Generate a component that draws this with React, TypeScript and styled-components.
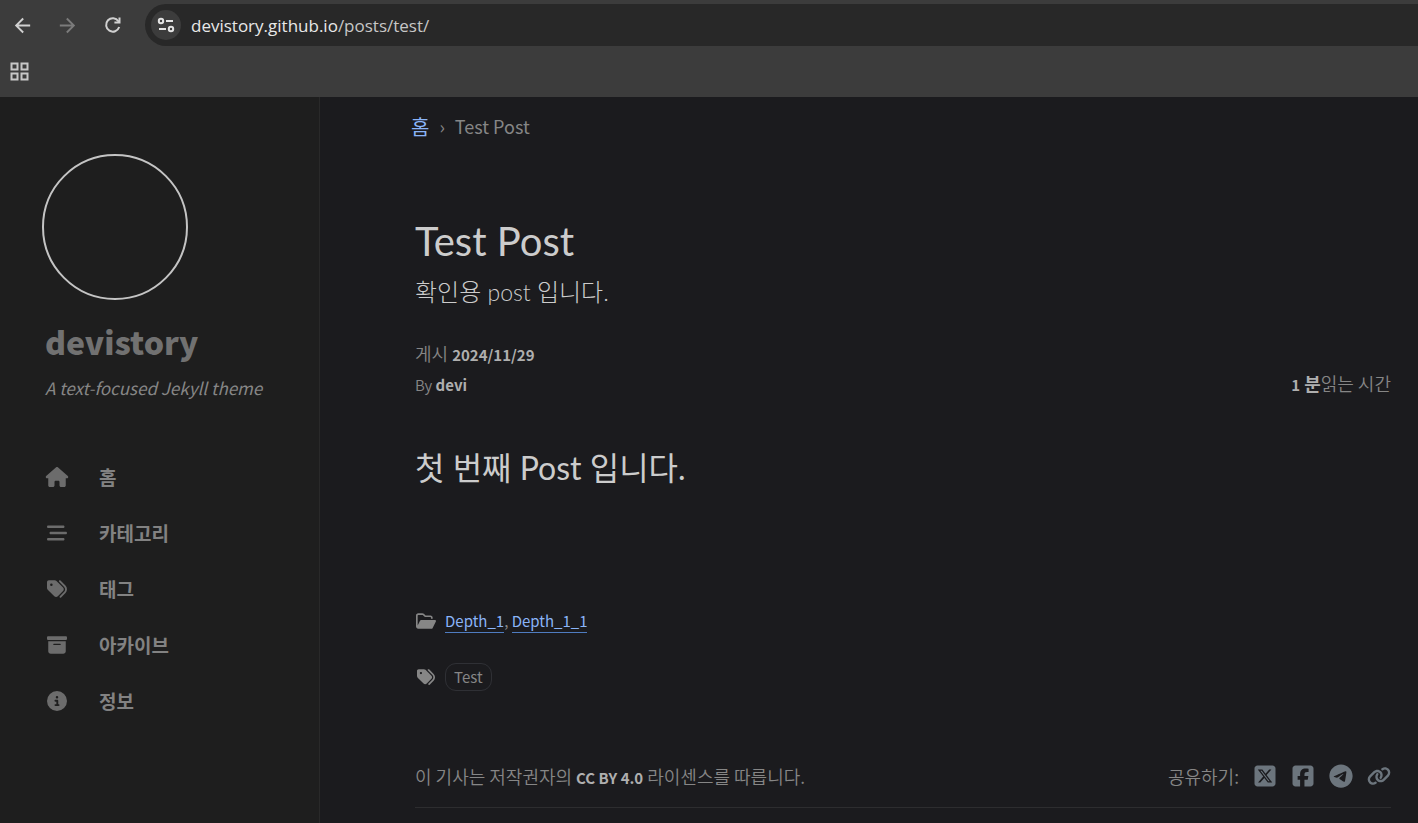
import React from 'react';
import styled, { createGlobalStyle, css } from 'styled-components';
import {
  FaHouse, FaBarsStaggered, FaTags, FaBoxArchive, FaCircleInfo,
  FaSquareXTwitter, FaSquareFacebook, FaTelegram, FaLink,
} from 'react-icons/fa6';
import { MdArrowBack, MdArrowForward } from 'react-icons/md';

const body = `'Noto Sans CJK KR', sans-serif`;
const heading = `Lato, 'Noto Sans CJK KR', sans-serif`;

const GlobalStyle = createGlobalStyle`
  * { box-sizing: border-box; }
  html, body, #root { height: 100%; }
  body {
    margin: 0;
    background: #1b1b1e;
    color: #868686;
    font-family: ${body};
    font-size: 16px;
  }
  a { color: inherit; text-decoration: none; }
  button { font: inherit; color: inherit; background: none; border: 0; padding: 0; cursor: pointer; }
  h1, h2, p, ul { margin: 0; padding: 0; font-weight: 400; }
`;

const Window = styled.div`
  display: flex;
  flex-direction: column;
  height: 100vh;
  overflow: hidden;
`;

const BrowserBar = styled.header`
  flex: none;
  background: #3c3c3c;
  padding-top: 4px;
`;

const NavRow = styled.div`
  display: flex;
  align-items: center;
  height: 42px;
`;

const NavButtons = styled.div`
  display: flex;
  gap: 21px;
  padding: 0 21px 0 10px;
`;

const NavButton = styled.button<{ $dim?: boolean }>`
  display: flex;
  align-items: center;
  justify-content: center;
  width: 24px;
  height: 24px;
  color: ${p => (p.$dim ? '#7b7b7b' : '#d0d0d0')};
`;

const AddressBar = styled.div`
  flex: 1;
  display: flex;
  align-items: center;
  gap: 10px;
  height: 42px;
  padding-left: 6px;
  background: #282828;
  border-radius: 21px 0 0 21px;
`;

const SiteInfo = styled.button`
  display: flex;
  align-items: center;
  justify-content: center;
  width: 30px;
  height: 30px;
  border-radius: 50%;
  background: #3c3c3c;
  color: #e3e3e3;
`;

const Url = styled.span`
  font-family: 'Open Sans', sans-serif;
  font-size: 17px;
  color: #c7c7c7;
  b { font-weight: 400; color: #e8e8e8; }
`;

const BookmarkRow = styled.div`
  display: flex;
  align-items: center;
  height: 51px;
  padding: 0 10px;
  color: #c7c7c7;
`;

const AppsButton = styled.button`
  display: flex;
`;

const Page = styled.div`
  flex: 1;
  display: flex;
  min-height: 0;
`;

const Sidebar = styled.aside`
  flex: none;
  width: 320px;
  background: #1e1e1e;
  border-right: 1px solid #292929;
  padding: 57px 24px 0 42px;
`;

const Avatar = styled.a`
  display: block;
  width: 146px;
  height: 146px;
  border: 2px solid #c4c4c4;
  border-radius: 50%;
`;

const SiteTitle = styled.h1`
  margin: 17px 0 0 3px;
  font-size: 32px;
  line-height: 48px;
  font-weight: 900;
  color: #717171;
`;

const Tagline = styled.p`
  margin: 8px 0 0 3px;
  font-size: 17px;
  line-height: 30px;
  font-style: italic;
  color: #868686;
`;

const Menu = styled.ul`
  list-style: none;
  margin-top: 46px;
`;

const MenuLink = styled.a`
  display: flex;
  align-items: center;
  gap: 30px;
  height: 56px;
  padding-left: 3px;
  font-size: 19px;
  font-weight: 700;
  color: #828282;
  svg { width: 24px; color: #6c6c6c; }
`;

const MenuText = styled.span`
  padding-bottom: 2px;
`;

const Main = styled.main`
  flex: 1;
  min-width: 0;
  padding: 0 27px 0 91px;
`;

const Breadcrumb = styled.nav`
  display: flex;
  align-items: center;
  gap: 10px;
  height: 58px;
  font-size: 18px;
`;

const HomeLink = styled.a`
  font-size: 20px;
  color: #8ab4f8;
`;

const Article = styled.article`
  padding-left: 4px;
`;

const PostTitle = styled.h1`
  margin-top: 54px;
  font-family: ${heading};
  font-size: 40px;
  line-height: 64px;
  color: #cccccc;
`;

const Description = styled.p`
  font-family: ${heading};
  font-weight: 300;
  font-size: 24px;
  line-height: 38px;
  color: #cccccc;
`;

const light = css`
  font-size: 18px;
  font-weight: 350;
`;

const Latin = styled.span<{ $size: number }>`
  font-size: ${p => p.$size}px;
`;

const Strong = styled.em<{ $korean?: boolean }>`
  font-style: normal;
  font-weight: 700;
  font-size: ${p => (p.$korean ? 18 : 15)}px;
  color: #afafaf;
`;

const Meta = styled.div`
  ${light}
  margin-top: 27px;
  line-height: 30px;
`;

const MetaRow = styled.div`
  display: flex;
  justify-content: space-between;
  height: 30px;
`;

const PostHeading = styled.h2`
  margin-top: 46px;
  font-family: ${heading};
  font-size: 32px;
  line-height: 48px;
  color: #cccccc;
`;

const Taxonomies = styled.div`
  margin-top: 115px;
`;

const TaxonomyRow = styled.div`
  display: flex;
  align-items: center;
  gap: 9px;
  height: 28px;
  font-size: 15px;
  & + & { margin-top: 28px; }
`;

const IconSlot = styled.span`
  display: flex;
  justify-content: center;
  width: 21px;
`;

const CategoryLink = styled.a`
  display: inline-block;
  color: #8ab4f8;
  border-bottom: 1px solid #4f7cc0;
  line-height: 22px;
`;

const Tag = styled.a`
  height: 28px;
  padding: 0 8px;
  line-height: 26px;
  border: 1px solid #2f3035;
  border-radius: 11px;
`;

const PostFooter = styled.footer`
  ${light}
  display: flex;
  align-items: center;
  justify-content: space-between;
  margin-top: 54px;
  height: 63px;
  border-bottom: 1px solid #2d2d2f;
`;

const Share = styled.div`
  display: flex;
  align-items: center;
  gap: 14px;
`;

const ShareLink = styled.a`
  display: flex;
  color: #6c757d;
`;

const ReloadIcon = () => (
  <svg width="22" height="22" viewBox="0 0 22 22" fill="none" stroke="currentColor" strokeWidth="2">
    <path d="M18.2 13A6.7 6.7 0 1 1 17.4 7.2L18 8" />
    <path d="M18.5 3.5V8.6H13.4" />
  </svg>
);

const TuneIcon = () => (
  <svg width="18" height="18" viewBox="0 0 18 18" fill="none" stroke="currentColor" strokeWidth="2">
    <circle cx="4" cy="5" r="2.2" />
    <path d="M9 5H16M2 13H9" />
    <circle cx="14" cy="13" r="2.2" />
  </svg>
);

const AppsIcon = () => (
  <svg width="19" height="19" viewBox="0 0 19 19" fill="none" stroke="currentColor" strokeWidth="2">
    <path d="M1.5 1.5h6v6h-6zM11.5 1.5h6v6h-6zM1.5 11.5h6v6h-6zM11.5 11.5h6v6h-6z" />
  </svg>
);

const FolderIcon = () => (
  <svg width="20" height="18" viewBox="0 0 576 512" fill="currentColor">
    <path d="M572.6 270.3l-96 192C471.2 473.2 460.1 480 447.1 480H64c-35.35 0-64-28.66-64-64V96c0-35.34 28.65-64 64-64h117.5c16.97 0 33.25 6.742 45.26 18.75L275.9 96H416c35.35 0 64 28.66 64 64v32h-48V160c0-8.824-7.178-16-16-16H256L192.8 84.69C189.8 81.66 185.8 80 181.5 80H64C55.18 80 48 87.18 48 96v288l71.16-142.3C124.6 230.8 135.7 224 147.8 224h396.2C567.7 224 583.2 249 572.6 270.3z" />
  </svg>
);

const menu = [
  { label: '홈', icon: <FaHouse size={20} /> },
  { label: '카테고리', icon: <FaBarsStaggered size={20} /> },
  { label: '태그', icon: <FaTags size={20} /> },
  { label: '아카이브', icon: <FaBoxArchive size={20} /> },
  { label: '정보', icon: <FaCircleInfo size={20} /> },
];

export default function App() {
  return (
    <Window>
      <GlobalStyle />
      <BrowserBar>
        <NavRow>
          <NavButtons>
            <NavButton aria-label="Back"><MdArrowBack size={23} /></NavButton>
            <NavButton aria-label="Forward" $dim><MdArrowForward size={23} /></NavButton>
            <NavButton aria-label="Reload"><ReloadIcon /></NavButton>
          </NavButtons>
          <AddressBar>
            <SiteInfo aria-label="Site information"><TuneIcon /></SiteInfo>
            <Url><b>devistory.github.io</b>/posts/test/</Url>
          </AddressBar>
        </NavRow>
        <BookmarkRow>
          <AppsButton aria-label="Apps"><AppsIcon /></AppsButton>
        </BookmarkRow>
      </BrowserBar>
      <Page>
        <Sidebar>
          <Avatar href="#" aria-label="devistory" />
          <SiteTitle><a href="#">devistory</a></SiteTitle>
          <Tagline>A text-focused Jekyll theme</Tagline>
          <Menu>
            {menu.map(m => (
              <li key={m.label}><MenuLink href="#">{m.icon}<MenuText>{m.label}</MenuText></MenuLink></li>
            ))}
          </Menu>
        </Sidebar>
        <Main>
          <Breadcrumb>
            <HomeLink href="#">홈</HomeLink>
            <span>›</span>
            <span>Test Post</span>
          </Breadcrumb>
          <Article>
            <PostTitle>Test Post</PostTitle>
            <Description>확인용<Latin $size={23}> post </Latin>입니다.</Description>
            <Meta>
              <MetaRow>
                <span>게시 <Strong>2024/11/29</Strong></span>
              </MetaRow>
              <MetaRow>
                <span><Latin $size={15}>By </Latin><Strong>devi</Strong></span>
                <span><Strong>1</Strong> <Strong $korean>분</Strong>읽는 시간</span>
              </MetaRow>
            </Meta>
            <PostHeading>첫 번째 Post 입니다.</PostHeading>
            <Taxonomies>
              <TaxonomyRow>
                <IconSlot><FolderIcon /></IconSlot>
                <span>
                  <CategoryLink href="#">Depth_1</CategoryLink>, <CategoryLink href="#">Depth_1_1</CategoryLink>
                </span>
              </TaxonomyRow>
              <TaxonomyRow>
                <IconSlot><FaTags size={18} /></IconSlot>
                <Tag href="#">Test</Tag>
              </TaxonomyRow>
            </Taxonomies>
            <PostFooter>
              <span>이 기사는 저작권자의 <Strong>CC BY 4.0</Strong> 라이센스를 따릅니다.</span>
              <Share>
                <span>공유하기:</span>
                <ShareLink href="#" aria-label="X"><FaSquareXTwitter size={24} /></ShareLink>
                <ShareLink href="#" aria-label="Facebook"><FaSquareFacebook size={24} /></ShareLink>
                <ShareLink href="#" aria-label="Telegram"><FaTelegram size={24} /></ShareLink>
                <ShareLink href="#" aria-label="Copy link"><FaLink size={24} /></ShareLink>
              </Share>
            </PostFooter>
          </Article>
        </Main>
      </Page>
    </Window>
  );
}
